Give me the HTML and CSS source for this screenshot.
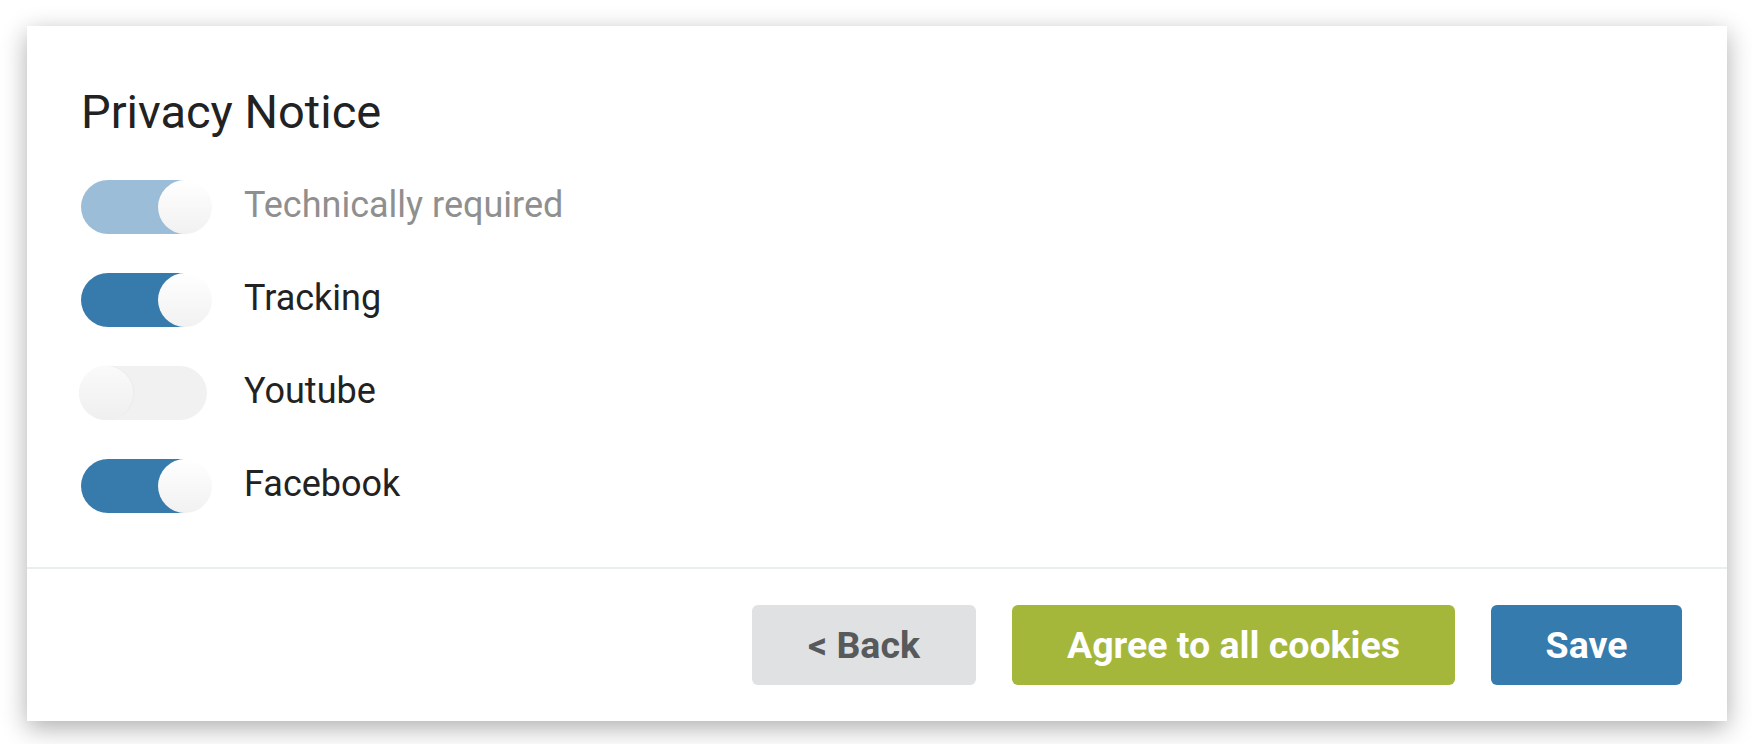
FILE: index.html
```html
<!DOCTYPE html>
<html lang="en">
<head>
<meta charset="utf-8">
<title>Privacy Notice</title>
<link rel="stylesheet" href="styles.css">
</head>
<body>
<div class="page">
  <div class="card">
    <div class="card-body">
      <h1 class="title">Privacy Notice</h1>
      <ul class="options">
        <li class="option">
          <span class="switch"><span class="track on disabled"><span class="knob"></span></span></span>
          <span class="label muted">Technically required</span>
        </li>
        <li class="option">
          <span class="switch"><span class="track on"><span class="knob"></span></span></span>
          <span class="label">Tracking</span>
        </li>
        <li class="option">
          <span class="switch"><span class="track off"><span class="knob"></span></span></span>
          <span class="label">Youtube</span>
        </li>
        <li class="option">
          <span class="switch"><span class="track on"><span class="knob"></span></span></span>
          <span class="label">Facebook</span>
        </li>
      </ul>
    </div>
    <div class="card-footer">
      <button class="btn btn-back">&lt; Back</button>
      <button class="btn btn-agree">Agree to all cookies</button>
      <button class="btn btn-save">Save</button>
    </div>
  </div>
</div>
</body>
</html>
```

FILE: styles.css
```css
html, body {
  margin: 0;
  padding: 0;
  background: #ffffff;
  min-height: 744px;
}

.page {
  padding: 26px 0 0 27px;
  font-family: Roboto, "Liberation Sans", sans-serif;
  color: #222222;
}

.card {
  width: 1700px;
  background: #ffffff;
  box-shadow: 0 7px 24px rgba(0, 0, 0, 0.32);
}

.card-body {
  padding: 59px 54px 54px 54px;
}

.title {
  margin: 0 0 41px 0;
  font-size: 47px;
  line-height: 54px;
  font-weight: 400;
  color: #222222;
}

.options {
  list-style: none;
  margin: 0;
  padding: 0;
  display: flex;
  flex-direction: column;
  gap: 39px;
}

.option {
  display: flex;
  align-items: center;
  gap: 32px;
  height: 54px;
}

.switch {
  width: 131px;
  height: 54px;
  display: flex;
}

.track {
  position: relative;
  height: 54px;
  border-radius: 27px;
}

.track.on {
  width: 124px;
  background: #367bac;
}

.track.on.disabled {
  background: #9bbdd7;
}

.track.off {
  width: 128px;
  margin-left: -2px;
  background: #f1f1f1;
}

.knob {
  position: absolute;
  top: 0;
  width: 54px;
  height: 54px;
  border-radius: 50%;
  background: linear-gradient(180deg, #ffffff 0%, #f1f1f1 100%);
}

.track.on .knob {
  left: 77px;
}

.track.off .knob {
  left: 0;
  background: linear-gradient(180deg, #fafafa 0%, #efefef 100%);
  box-shadow: 1px 0 2px rgba(0, 0, 0, 0.03);
}

.label {
  font-size: 36px;
  line-height: 54px;
  padding-bottom: 4px;
  color: #222222;
}

.label.muted {
  color: #8f8f8f;
}

.card-footer {
  border-top: 2px solid #e9eeee;
  padding: 36px 45px 36px 54px;
  display: flex;
  justify-content: flex-end;
  gap: 36px;
}

.btn {
  height: 80px;
  border: none;
  border-radius: 6px;
  font-family: Roboto, "Liberation Sans", sans-serif;
  font-weight: 700;
  font-size: 37.5px;
  padding: 0;
  cursor: pointer;
}

.btn-back {
  width: 224px;
  background: #e0e1e3;
  color: #58595b;
}

.btn-agree {
  width: 443px;
  background: #a4b73b;
  color: #ffffff;
}

.btn-save {
  width: 191px;
  background: #367bad;
  color: #ffffff;
}
```
